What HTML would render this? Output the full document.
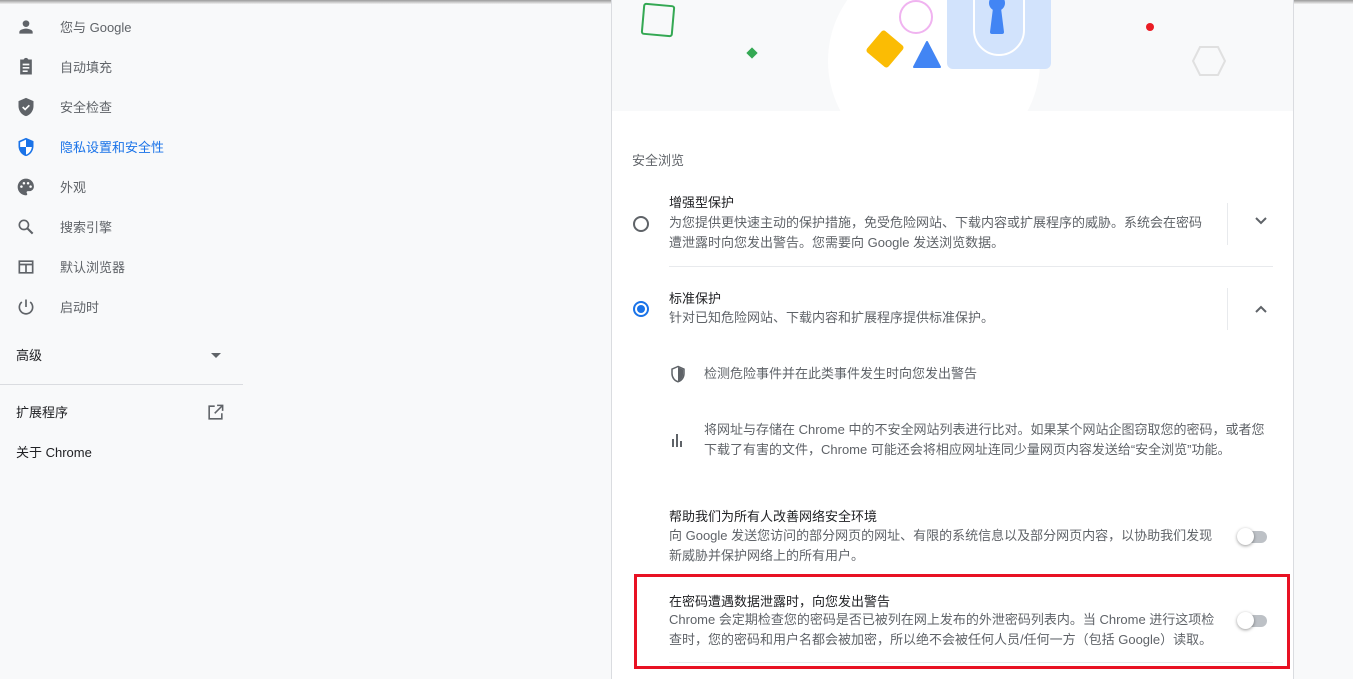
<!DOCTYPE html>
<html><head><meta charset="utf-8"><style>
*{margin:0;padding:0;box-sizing:border-box}
body{width:1353px;height:679px;overflow:hidden;background:#f8f9fa;font-family:"Liberation Sans","Noto Sans CJK SC",sans-serif;font-size:13px;color:#202124;position:relative}
.a{position:absolute;white-space:nowrap}
.nav{color:#5f6368;left:60px}
.ic{position:absolute;left:16px;width:20px;height:20px}
.card{position:absolute;left:611px;top:0;width:683px;height:679px;background:#fff;border-left:1px solid #dadce0;border-right:1px solid #dadce0}
.d{color:#5f6368;line-height:20px}
.tg{position:absolute;width:32px;height:14px}
.tg .t{position:absolute;left:2px;top:1px;width:28px;height:12px;border-radius:6px;background:#bdc1c6}
.tg .k{position:absolute;left:0;top:-2px;width:17px;height:17px;border-radius:50%;background:#fff;box-shadow:0 1px 3px rgba(0,0,0,.4)}
</style></head><body>
<div style="position:absolute;left:0;top:0;width:1353px;height:4px;background:linear-gradient(#9a9a9a,#f0f0f0)"></div>
<svg class="ic" style="top:17px" viewBox="0 0 24 24" fill="#5f6368"><circle cx="12" cy="8" r="4"/><path d="M4 20v-2c0-2.7 5.3-4 8-4s8 1.3 8 4v2z"/></svg>
<div class="a nav" style="top:17px">您与 Google</div>
<svg class="ic" style="top:57px" viewBox="0 0 24 24" fill="#5f6368"><path d="M19 3h-4.2C14.4 1.8 13.3 1 12 1s-2.4.8-2.8 2H5v18h14zM8 8h8v2H8zm0 4h8v2H8zm0 4h6v2H8z"/></svg>
<div class="a nav" style="top:57px">自动填充</div>
<svg class="ic" style="top:97px" viewBox="0 0 24 24" fill="#5f6368"><path d="M12 1L3 5v6c0 5.5 3.8 10.7 9 12 5.2-1.3 9-6.5 9-12V5z"/><path d="M8 12l3 3 5-5" stroke="#fff" stroke-width="2" fill="none"/></svg>
<div class="a nav" style="top:97px">安全检查</div>
<svg class="ic" style="top:137px" viewBox="0 0 24 24" fill="#1a73e8"><path d="M12 1L3 5v6c0 5.5 3.8 10.7 9 12 5.2-1.3 9-6.5 9-12V5z"/><path d="M12 3.2v8.8H5V6.3zM12 12h7c-.5 4.4-3.5 8.2-7 9.2z" fill="#fff"/></svg>
<div class="a nav" style="top:137px;color:#1a73e8">隐私设置和安全性</div>
<svg class="ic" style="top:177px" viewBox="0 0 24 24" fill="#5f6368"><path d="M12 2C6.5 2 2 6.5 2 12s4.5 10 10 10c.9 0 1.5-.7 1.5-1.5 0-.4-.2-.8-.4-1-.2-.3-.4-.6-.4-1 0-.8.7-1.5 1.5-1.5H16c3 0 5.5-2.5 5.5-5.5C21.5 6 17.2 2 12 2z"/><circle cx="6.5" cy="11.5" r="1.5" fill="#fff"/><circle cx="9.5" cy="7.5" r="1.5" fill="#fff"/><circle cx="14.5" cy="7.5" r="1.5" fill="#fff"/><circle cx="17.5" cy="11.5" r="1.5" fill="#fff"/></svg>
<div class="a nav" style="top:177px">外观</div>
<svg class="ic" style="top:217px" viewBox="0 0 24 24"><circle cx="9.5" cy="9.5" r="5.5" stroke="#5f6368" stroke-width="2" fill="none"/><path d="M13.5 13.5L20 20" stroke="#5f6368" stroke-width="2.5"/></svg>
<div class="a nav" style="top:217px">搜索引擎</div>
<svg class="ic" style="top:257px" viewBox="0 0 24 24" fill="#5f6368"><path d="M3 4h18v16H3zm2 6v8h6v-8zm8 0v8h6v-8zM5 6v2h14V6z"/></svg>
<div class="a nav" style="top:257px">默认浏览器</div>
<svg class="ic" style="top:297px" viewBox="0 0 24 24" fill="none" stroke="#5f6368" stroke-width="2"><path d="M12 3v9"/><path d="M7 6a8 8 0 1 0 10 0"/></svg>
<div class="a nav" style="top:297px">启动时</div>
<div class="a" style="left:16px;top:345px;color:#202124">高级</div>
<div class="a" style="left:211px;top:353px;width:0;height:0;border-left:5px solid transparent;border-right:5px solid transparent;border-top:5px solid #5f6368"></div>
<div class="a" style="left:0;top:384px;width:243px;height:1px;background:#dadce0"></div>
<div class="a" style="left:16px;top:402px">扩展程序</div>
<svg class="a" style="left:206px;top:403px" width="19" height="19" viewBox="0 0 24 24" fill="none" stroke="#5f6368" stroke-width="2"><path d="M11 4H4v16h16v-7"/><path d="M14 3h7v7M21 3L11 13"/></svg>
<div class="a" style="left:16px;top:442px">关于 Chrome</div>

<div class="card">
<div style="position:absolute;left:0;top:0;width:681px;height:111px;background:#f8f9fa;overflow:hidden">
<div style="position:absolute;left:216px;top:-45px;width:212px;height:212px;border-radius:50%;background:#fff"></div>
<svg style="position:absolute;left:0;top:0" width="681" height="111">
<rect x="31" y="5" width="30" height="30" rx="2" transform="rotate(5 46 20)" fill="none" stroke="#34a853" stroke-width="2"/>
<rect x="136" y="49" width="8" height="8" transform="rotate(45 140 53)" fill="#34a853"/>
<circle cx="304" cy="17" r="16" fill="none" stroke="#f0b3f0" stroke-width="2"/>
<rect x="259" y="35" width="28" height="28" rx="3" transform="rotate(40 273 49)" fill="#fbbc04"/>
<path d="M315 42l-13 25h26z" fill="#4285f4" stroke="#4285f4" stroke-linejoin="round" stroke-width="2"/>
<rect x="335" y="-10" width="104" height="79" rx="6" fill="#d2e3fc"/>
<path d="M362 0v30a25 25 0 0 0 50 0V0" fill="none" stroke="#fff" stroke-width="2"/>
<circle cx="385" cy="3" r="8" fill="#4285f4"/>
<path d="M381 8l-3 24a2 2 0 0 0 2 2h10a2 2 0 0 0 2-2l-3-24z" fill="#4285f4"/>
<circle cx="538" cy="27" r="4" fill="#ea1c24"/>
<path d="M588 47h18l7 14-7 14h-18l-7-14z" fill="none" stroke="#e0e0e0" stroke-width="2"/>
</svg>
</div>
<div class="a" style="left:20px;top:150px;color:#5f6368">安全浏览</div>
<div style="position:absolute;left:21px;top:216px;width:16px;height:16px;border-radius:50%;border:2px solid #5f6368"></div>
<div class="a" style="left:57px;top:192px">增强型保护</div>
<div class="a d" style="left:57px;top:213px">为您提供更快速主动的保护措施，免受危险网站、下载内容或扩展程序的威胁。系统会在密码<br>遭泄露时向您发出警告。您需要向 Google 发送浏览数据。</div>
<div class="a" style="left:615px;top:203px;width:1px;height:42px;background:#e8eaed"></div>
<svg class="a" style="left:642px;top:216px" width="14" height="10" viewBox="0 0 14 10"><path d="M2 2l5 5 5-5" stroke="#5f6368" stroke-width="2" fill="none"/></svg>
<div class="a" style="left:57px;top:266px;width:604px;height:1px;background:#e8eaed"></div>
<div style="position:absolute;left:21px;top:301px;width:16px;height:16px;border-radius:50%;border:2px solid #1a73e8"><div style="position:absolute;left:2px;top:2px;width:8px;height:8px;border-radius:50%;background:#1a73e8"></div></div>
<div class="a" style="left:57px;top:288px">标准保护</div>
<div class="a d" style="left:57px;top:308px">针对已知危险网站、下载内容和扩展程序提供标准保护。</div>
<div class="a" style="left:615px;top:288px;width:1px;height:42px;background:#e8eaed"></div>
<svg class="a" style="left:642px;top:304px" width="14" height="10" viewBox="0 0 14 10"><path d="M2 8l5-5 5 5" stroke="#5f6368" stroke-width="2" fill="none"/></svg>
<svg class="a" style="left:57px;top:364px" width="18" height="20" viewBox="0 0 24 24"><path d="M12 2L4 5.5v6c0 5 3.4 9.6 8 10.8 4.6-1.2 8-5.8 8-10.8v-6z" fill="none" stroke="#5f6368" stroke-width="2"/><path d="M12 3v18.5c3.8-1 7-5.3 7-10V6z" fill="#5f6368"/></svg>
<div class="a d" style="left:92px;top:364px">检测危险事件并在此类事件发生时向您发出警告</div>
<svg class="a" style="left:59px;top:433px" width="14" height="14" viewBox="0 0 14 14" fill="#5f6368"><rect x="1" y="6" width="2" height="8"/><rect x="5" y="1" width="2" height="13"/><rect x="9" y="8" width="2" height="6"/></svg>
<div class="a d" style="left:92px;top:420px">将网址与存储在 Chrome 中的不安全网站列表进行比对。如果某个网站企图窃取您的密码，或者您<br>下载了有害的文件，Chrome 可能还会将相应网址连同少量网页内容发送给“安全浏览”功能。</div>
<div class="a" style="left:57px;top:506px">帮助我们为所有人改善网络安全环境</div>
<div class="a d" style="left:57px;top:526px">向 Google 发送您访问的部分网页的网址、有限的系统信息以及部分网页内容，以协助我们发现<br>新威胁并保护网络上的所有用户。</div>
<div class="tg" style="left:625px;top:530px"><div class="t"></div><div class="k"></div></div>
<div class="a" style="left:57px;top:591px">在密码遭遇数据泄露时，向您发出警告</div>
<div class="a d" style="left:57px;top:610px">Chrome 会定期检查您的密码是否已被列在网上发布的外泄密码列表内。当 Chrome 进行这项检<br>查时，您的密码和用户名都会被加密，所以绝不会被任何人员/任何一方（包括 Google）读取。</div>
<div class="tg" style="left:625px;top:614px"><div class="t"></div><div class="k"></div></div>
<div class="a" style="left:57px;top:662px;width:604px;height:1px;background:#e8eaed"></div>
</div>
<div class="a" style="left:634px;top:574px;width:656px;height:95px;border:3px solid #e81123"></div>
</body></html>
